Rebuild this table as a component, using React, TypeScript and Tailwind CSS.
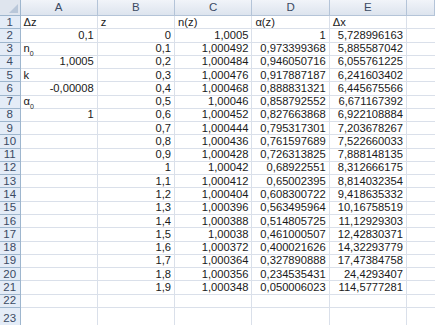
const cols = ["A", "B", "C", "D", "E", ""];

type Cell = { v: React.ReactNode; left?: boolean };

const sub = (base: string) => (
  <span>
    {base}
    <sub className="text-[7px] align-[-2px]">0</sub>
  </span>
);

const rows: Cell[][] = [
  [{ v: "Δz", left: true }, { v: "z", left: true }, { v: "n(z)", left: true }, { v: "α(z)", left: true }, { v: "Δx", left: true }],
  [{ v: "0,1" }, { v: "0" }, { v: "1,0005" }, { v: "1" }, { v: "5,728996163" }],
  [{ v: sub("n"), left: true }, { v: "0,1" }, { v: "1,000492" }, { v: "0,973399368" }, { v: "5,885587042" }],
  [{ v: "1,0005" }, { v: "0,2" }, { v: "1,000484" }, { v: "0,946050716" }, { v: "6,055761225" }],
  [{ v: "k", left: true }, { v: "0,3" }, { v: "1,000476" }, { v: "0,917887187" }, { v: "6,241603402" }],
  [{ v: "-0,00008" }, { v: "0,4" }, { v: "1,000468" }, { v: "0,888831321" }, { v: "6,445675566" }],
  [{ v: sub("α"), left: true }, { v: "0,5" }, { v: "1,00046" }, { v: "0,858792552" }, { v: "6,671167392" }],
  [{ v: "1" }, { v: "0,6" }, { v: "1,000452" }, { v: "0,827663868" }, { v: "6,922108884" }],
  [{ v: "" }, { v: "0,7" }, { v: "1,000444" }, { v: "0,795317301" }, { v: "7,203678267" }],
  [{ v: "" }, { v: "0,8" }, { v: "1,000436" }, { v: "0,761597689" }, { v: "7,522660033" }],
  [{ v: "" }, { v: "0,9" }, { v: "1,000428" }, { v: "0,726313825" }, { v: "7,888148135" }],
  [{ v: "" }, { v: "1" }, { v: "1,00042" }, { v: "0,68922551" }, { v: "8,312666175" }],
  [{ v: "" }, { v: "1,1" }, { v: "1,000412" }, { v: "0,65002395" }, { v: "8,814032354" }],
  [{ v: "" }, { v: "1,2" }, { v: "1,000404" }, { v: "0,608300722" }, { v: "9,418635332" }],
  [{ v: "" }, { v: "1,3" }, { v: "1,000396" }, { v: "0,563495964" }, { v: "10,16758519" }],
  [{ v: "" }, { v: "1,4" }, { v: "1,000388" }, { v: "0,514805725" }, { v: "11,12929303" }],
  [{ v: "" }, { v: "1,5" }, { v: "1,00038" }, { v: "0,461000507" }, { v: "12,42830371" }],
  [{ v: "" }, { v: "1,6" }, { v: "1,000372" }, { v: "0,400021626" }, { v: "14,32293779" }],
  [{ v: "" }, { v: "1,7" }, { v: "1,000364" }, { v: "0,327890888" }, { v: "17,47384758" }],
  [{ v: "" }, { v: "1,8" }, { v: "1,000356" }, { v: "0,234535431" }, { v: "24,4293407" }],
  [{ v: "" }, { v: "1,9" }, { v: "1,000348" }, { v: "0,050006023" }, { v: "114,5777281" }],
  [{ v: "" }, { v: "" }, { v: "" }, { v: "" }, { v: "" }],
  [{ v: "" }, { v: "" }, { v: "" }, { v: "" }, { v: "" }],
];

export default function App() {
  return (
    <div className="w-[435px] h-[325px] overflow-hidden bg-white font-['Liberation_Sans',Arial,sans-serif] text-[11.2px] text-[#1a1a1a]">
      <div className="grid grid-cols-[20.5px_repeat(5,77.3px)_1fr] grid-rows-[16px_repeat(22,13.27px)_22px]">
        {/* Corner */}
        <div className="relative bg-[#dfe5ee] border-r border-b border-[#9eb6ce]">
          <div className="absolute right-[2px] bottom-[2px] w-0 h-0 border-l-[9px] border-l-transparent border-b-[9px] border-b-[#b9c7d9]" />
        </div>
        {/* Column headers */}
        {cols.map((c, i) => (
          <div
            key={i}
            className="flex items-center justify-center bg-gradient-to-b from-[#f1f4f9] to-[#dde4ee] border-r border-b border-[#b4c4d8] text-[11.5px] text-[#3b4a63]"
          >
            {c}
          </div>
        ))}
        {/* Rows */}
        {rows.map((r, ri) => (
          <Row key={ri} n={ri + 1} cells={r} />
        ))}
      </div>
    </div>
  );
}

function Row({ n, cells }: { n: number; cells: Cell[] }) {
  return (
    <>
      <div className="flex items-center justify-center bg-[#e4ecf7] border-r border-b border-[#9eb6ce] text-[11.5px] text-[#3b4a63]">
        {n}
      </div>
      {cells.map((c, i) => (
        <div
          key={i}
          className={`flex items-center overflow-visible whitespace-nowrap border-r border-b border-[#dae0ea] px-[3px] leading-none ${
            c.left ? "justify-start" : "justify-end"
          }`}
        >
          {c.v}
        </div>
      ))}
      <div className="border-b border-[#dae0ea]" />
    </>
  );
}
